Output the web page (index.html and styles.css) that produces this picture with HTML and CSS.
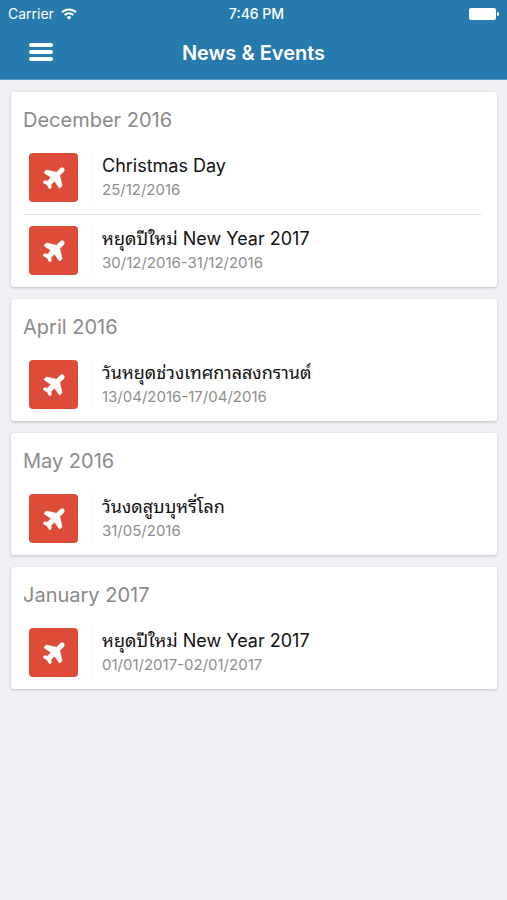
FILE: index.html
```html
<!DOCTYPE html>
<html lang="en">
<head>
    <meta charset="UTF-8">
    <meta name="viewport" content="width=device-width, initial-scale=1.0">
    <title>News &amp; Events</title>
    <link rel="stylesheet" href="styles.css">
</head>
<body>

<!-- Shared icons -->
<svg class="sprite" aria-hidden="true">
    <symbol id="plane" viewBox="0 0 24 24">
        <path stroke="#fff" stroke-width=".8" stroke-linejoin="round" d="M22.600 1.400c-1.200-1-2.900-.5-4 .5l-4 3.900L4.300 3.500c-.5-.1-.9 0-1.200.3L1.700 5.200c-.5.5-.4 1.200.2 1.500l6.900 4.700-3.800 4.100-2.900-.4c-.4 0-.7.1-.9.3l-.7.8c-.4.4-.3 1 .2 1.200l3.600 1.900c.2.100.4.300.5.500l1.900 3.600c.3.500.9.600 1.200.2l.8-.7c.2-.2.400-.6.300-.9l-.4-2.900 4.100-3.800 4.700 6.900c.3.600 1 .7 1.500.2l1.400-1.400c.3-.3.400-.7.300-1.200L18.200 9.400l3.900-4c1-1.100 1.500-2.800.5-4z"/>
    </symbol>
</svg>

<header>
    <div class="status-bar">
        <div class="carrier">
            <span>Carrier</span>
            <svg width="16" height="12" viewBox="0 0 16 12" fill="none" stroke="#fff" stroke-width="2">
                <path d="M1 4.300a10 10 0 0 1 14 0M3.600 7.100a6.200 6.200 0 0 1 8.800 0"/>
                <path d="M8 11.800 5.600 9.300a3.400 3.400 0 0 1 4.800 0z" fill="#fff" stroke="none"/>
            </svg>
        </div>
        <span class="time">7:46 PM</span>
        <svg class="battery" width="30" height="12" viewBox="0 0 30 12" fill="#fff">
            <rect width="27" height="12" rx="2"/>
            <path d="M28 4c3 .3 3 3.700 0 4z"/>
        </svg>
    </div>
    <div class="nav-bar">
        <button type="button" class="menu-btn" aria-label="Menu">
            <span></span>
            <span></span>
            <span></span>
        </button>
        <h1>News &amp; Events</h1>
    </div>
</header>

<main>
    <section class="card">
        <h2>December 2016</h2>
        <div class="event">
            <div class="icon"><svg><use href="#plane"/></svg></div>
            <div class="info">
                <h3>Christmas Day</h3>
                <p>25/12/2016</p>
            </div>
        </div>
        <div class="event">
            <div class="icon"><svg><use href="#plane"/></svg></div>
            <div class="info">
                <h3>หยุดปีใหม่ New Year 2017</h3>
                <p>30/12/2016-31/12/2016</p>
            </div>
        </div>
    </section>

    <section class="card">
        <h2>April 2016</h2>
        <div class="event">
            <div class="icon"><svg><use href="#plane"/></svg></div>
            <div class="info">
                <h3>วันหยุดช่วงเทศกาลสงกรานต์</h3>
                <p>13/04/2016-17/04/2016</p>
            </div>
        </div>
    </section>

    <section class="card">
        <h2>May 2016</h2>
        <div class="event">
            <div class="icon"><svg><use href="#plane"/></svg></div>
            <div class="info">
                <h3>วันงดสูบบุหรี่โลก</h3>
                <p>31/05/2016</p>
            </div>
        </div>
    </section>

    <section class="card">
        <h2>January 2017</h2>
        <div class="event">
            <div class="icon"><svg><use href="#plane"/></svg></div>
            <div class="info">
                <h3>หยุดปีใหม่ New Year 2017</h3>
                <p>01/01/2017-02/01/2017</p>
            </div>
        </div>
    </section>
</main>

</body>
</html>
```
FILE: styles.css
```css
* {
    box-sizing: border-box;
}
body {
    font-family: Inter, "Noto Sans Thai Looped", Loma, Waree, Garuda, "Noto Serif Thai", sans-serif;
    margin: 0;
    background-color: #efeff4;
    color: #111;
}
h1, h2, h3, p {
    margin: 0;
}
.sprite {
    display: none;
}
header {
    background-color: #267aad;
    color: white;
    border-bottom: 1px solid #5b9cc4;
}
/* Status bar */
.status-bar {
    display: grid;
    grid-template-columns: 1fr auto 1fr;
    align-items: center;
    height: 27px;
    padding: 0 8px;
    font-size: 14px;
}
.carrier {
    display: flex;
    align-items: center;
    gap: 7px;
}
.time {
    padding-left: 6px;
    font-weight: 500;
}
.battery {
    justify-self: end;
}
/* Navigation bar */
.nav-bar {
    display: grid;
    grid-template-columns: 1fr auto 1fr;
    align-items: center;
    height: 52px;
    padding: 0 29px;
}
.nav-bar h1 {
    font-size: 20px;
    font-weight: 600;
}
.menu-btn {
    display: flex;
    flex-direction: column;
    gap: 3px;
    width: 24px;
    padding: 0 0 2px;
    border: none;
    background: none;
    cursor: pointer;
}
.menu-btn span {
    width: 100%;
    height: 4px;
    border-radius: 2px;
    background-color: white;
}
/* Cards */
main {
    display: flex;
    flex-direction: column;
    gap: 12px;
    padding: 12px 10px 12px 11px;
}
.card {
    background-color: white;
    border-radius: 3px;
    padding: 0 15px 0 12px;
    box-shadow: 0 1px 3px rgba(0, 0, 0, 0.2);
}
.card h2 {
    padding-top: 13px;
    height: 49px;
    font-size: 20px;
    line-height: 30px;
    font-weight: 400;
    color: #8a8a8a;
}
.event {
    display: flex;
    gap: 13px;
    padding: 12px 0 12px 6px;
}
.event + .event {
    padding-top: 11px;
    border-top: 1px solid #e8e8e8;
}
.icon {
    display: flex;
    align-items: center;
    justify-content: center;
    width: 49px;
    height: 49px;
    border-radius: 4px;
    background-color: #dd4b39;
}
.icon svg {
    width: 22px;
    height: 22px;
    fill: white;
}
.info {
    flex: 1;
    border-left: 1px solid #f4f4f4;
    padding-left: 10px;
}
.info h3 {
    font-size: 18px;
    line-height: 26px;
    font-weight: 400;
}
.info p {
    font-size: 15px;
    line-height: 22px;
    color: #8e8e8e;
}
```
